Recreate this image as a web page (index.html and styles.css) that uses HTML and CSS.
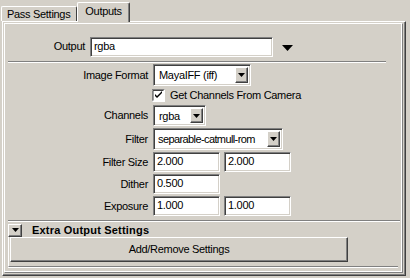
FILE: index.html
```html
<!doctype html>
<html>
<head>
  <title>Outputs</title>
  <link rel="stylesheet" href="styles.css">
</head>
<body>
  <div class="tabs">
    <div class="tab">Pass Settings</div>
    <div class="tab tab-active">Outputs</div>
  </div>
  <div class="panel">
    <div class="frame">
      <div class="output-row">
        <span class="output-label">Output</span>
        <div class="field output-field">rgba</div>
        <svg class="menu-arrow" width="11" height="6" viewBox="0 0 11 6"><path d="M0 0h11L5.5 6z" fill="#000"/></svg>
      </div>
      <div class="sep"></div>
      <div class="form">
        <span class="label">Image Format</span>
        <div class="combo combo-format"><span class="combo-text">MayaIFF (iff)</span><span class="combo-btn"><svg width="7" height="4" viewBox="0 0 7 4"><path d="M0 0h7L3.5 4z" fill="#000"/></svg></span></div>

        <span class="label"></span>
        <label class="check-row">
          <svg class="check" width="13" height="13" viewBox="0 0 13 13">
            <path d="M0 0h13v13H0z" fill="#fff"/>
            <path d="M0 12.5V0.5h12.5" fill="none" stroke="#808080"/>
            <path d="M1 11.5V1.5h10.5" fill="none" stroke="#404040"/>
            <path d="M3 5l2 2 5-5v2l-5 5-2-2z" fill="#000"/>
          </svg>
          <span>Get Channels From Camera</span>
        </label>

        <span class="label">Channels</span>
        <div class="combo combo-channels"><span class="combo-text">rgba</span><span class="combo-btn"><svg width="7" height="4" viewBox="0 0 7 4"><path d="M0 0h7L3.5 4z" fill="#000"/></svg></span></div>

        <span class="label">Filter</span>
        <div class="combo combo-filter"><span class="combo-text">separable-catmull-rom</span><span class="combo-btn"><svg width="7" height="4" viewBox="0 0 7 4"><path d="M0 0h7L3.5 4z" fill="#000"/></svg></span></div>

        <span class="label">Filter Size</span>
        <div class="pair"><div class="field num">2.000</div><div class="field num">2.000</div></div>

        <span class="label">Dither</span>
        <div class="pair"><div class="field num">0.500</div></div>

        <span class="label">Exposure</span>
        <div class="pair"><div class="field num">1.000</div><div class="field num">1.000</div></div>
      </div>
      <div class="sep sep-wide"></div>
      <div class="section">
        <div class="section-head">
          <span class="collapse-btn"><svg width="7" height="4" viewBox="0 0 7 4"><path d="M0 0h7L3.5 4z" fill="#000"/></svg></span>
          <span class="section-title">Extra Output Settings</span>
        </div>
        <div class="section-body">
          <div class="button">Add/Remove Settings</div>
        </div>
      </div>
    </div>
  </div>
</body>
</html>
```

FILE: styles.css
```css
body {
  margin: 0;
  width: 410px;
  height: 278px;
  overflow: hidden;
  background: #D4D0C8;
  color: #000;
  font: 11px/1 "Liberation Sans", Arial, sans-serif;
  letter-spacing: -0.3px;
}
body * {
  box-sizing: border-box;
}
.tabs {
  display: flex;
  align-items: flex-end;
  height: 21px;
  padding-left: 1px;
}
.tab {
  height: 15px;
  padding: 1px 6px 0 5px;
  border-top: 1px solid #fff;
  border-left: 1px solid #fff;
  border-right: 1px solid #404040;
  border-radius: 2px 2px 0 0;
  line-height: 13px;
}
.tab-active {
  position: relative;
  z-index: 1;
  height: 20px;
  margin-bottom: -1px;
  padding: 2px 7px 0 7px;
  background: #D4D0C8;
  box-shadow: inset -1px 0 #808080;
}
.panel {
  height: 255px;
  margin: 0 4px 0 2px;
  padding: 1px 1px 2px 1px;
  border-top: 1px solid #fff;
  border-left: 1px solid #fff;
  border-right: 1px solid #404040;
  border-bottom: 1px solid #404040;
  box-shadow: inset -1px -1px #808080;
}
.frame {
  height: 100%;
  padding: 0 0 0 3px;
  border-top: 1px solid #fff;
  border-left: 1px solid #fff;
  border-right: 1px solid #808080;
  border-bottom: 1px solid #808080;
  box-shadow: inset -1px -1px #fff;
  margin-right: 1px;
}
.output-row {
  display: flex;
  align-items: center;
  height: 21px;
  margin-top: 12px;
}
.output-label {
  width: 77px;
  text-align: right;
}
.field {
  height: 20px;
  padding: 3px 0 0 3px;
  background: #fff;
  border-top: 1px solid #808080;
  border-left: 1px solid #808080;
  border-right: 1px solid #fff;
  border-bottom: 1px solid #fff;
  box-shadow: inset 1px 1px #404040, inset -1px -1px #D4D0C8;
  white-space: nowrap;
}
.output-field {
  width: 183px;
  margin-left: 5px;
}
.menu-arrow {
  margin: 2px 0 0 9px;
}
.sep {
  width: 378px;
  height: 2px;
  margin-top: 4px;
  border-top: 1px solid #808080;
  border-bottom: 1px solid #fff;
}
.sep-wide {
  width: 392px;
  margin-top: 4px;
}
.form {
  display: grid;
  grid-template-columns: 140px auto;
  grid-template-rows: 22px 15px 21px 22px 20px 20px 20px;
  column-gap: 5px;
  row-gap: 2px;
  align-items: center;
  margin-top: 1px;
}
.label {
  text-align: right;
}
.combo {
  display: flex;
  height: 100%;
  background: #fff;
  border-top: 1px solid #808080;
  border-left: 1px solid #808080;
  border-right: 1px solid #fff;
  border-bottom: 1px solid #fff;
  box-shadow: inset 1px 1px #404040, inset -1px -1px #D4D0C8;
  padding: 2px;
}
.combo-text {
  flex: 1;
  padding: 3px 0 0 3px;
  white-space: nowrap;
  overflow: hidden;
}
.combo-btn {
  display: flex;
  align-items: center;
  justify-content: center;
  width: 13px;
  background: #D4D0C8;
  border-top: 1px solid #fff;
  border-left: 1px solid #fff;
  border-right: 1px solid #404040;
  border-bottom: 1px solid #404040;
  box-shadow: inset -1px -1px #808080;
}
.combo-format {
  width: 98px;
}
.combo-channels {
  width: 53px;
}
.combo-filter {
  width: 130px;
}
.combo-filter .combo-text {
  padding-left: 2px;
  letter-spacing: -0.6px;
}
.check-row {
  display: flex;
  align-items: center;
  gap: 5px;
  height: 15px;
}
.check {
  margin-left: -1px;
}
.pair {
  display: flex;
  gap: 4px;
}
.num {
  width: 67px;
}
.section {
  margin-top: 1px;
  margin-right: 4px;
}
.section-head {
  display: flex;
  align-items: center;
  height: 14px;
}
.collapse-btn {
  display: flex;
  align-items: center;
  justify-content: center;
  width: 14px;
  height: 13px;
  border-top: 1px solid #fff;
  border-left: 1px solid #fff;
  border-right: 1px solid #404040;
  border-bottom: 1px solid #404040;
  box-shadow: inset -1px -1px #808080;
}
.section-title {
  margin-left: 10px;
  font-weight: bold;
  letter-spacing: 0.2px;
}
.section-body {
  padding: 0 0 4px 1px;
  border-left: 1px solid #fff;
  border-bottom: 1px solid #808080;
  box-shadow: 0 1px #fff;
}
.button {
  width: 338px;
  height: 25px;
  line-height: 22px;
  text-align: center;
  border-top: 1px solid #fff;
  border-left: 1px solid #fff;
  border-right: 1px solid #404040;
  border-bottom: 1px solid #404040;
  box-shadow: inset -1px -1px #808080;
}
```
